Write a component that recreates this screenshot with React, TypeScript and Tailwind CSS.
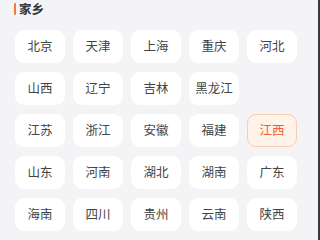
import React from "react";

const rows: string[][] = [
  ["北京", "天津", "上海", "重庆", "河北"],
  ["山西", "辽宁", "吉林", "黑龙江"],
  ["江苏", "浙江", "安徽", "福建", "江西"],
  ["山东", "河南", "湖北", "湖南", "广东"],
  ["海南", "四川", "贵州", "云南", "陕西"],
];

export default function App() {
  const font = { fontFamily: '"Noto Sans CJK SC", "Noto Sans", sans-serif' };
  return (
    <div className="w-[320px] h-[240px] overflow-hidden bg-[#f4f4f6] flex" style={font}>
      <div className="flex-1 flex flex-col">
        <div className="flex items-center h-[18px] mt-[0px] pl-[14px] gap-[3px]">
          <div className="w-[2px] h-[12px] bg-[#f07a3a] rounded-[1px]" />
          <span className="text-[12.5px] leading-none font-bold text-[#333]">家乡</span>
        </div>
        <div className="flex flex-col gap-[9px] mt-[12px] pl-[15px]">
          {rows.map((r, i) => (
            <div key={i} className="flex gap-[8px]">
              {r.map((name) => {
                const sel = name === "江西";
                return (
                  <div
                    key={name}
                    className={
                      sel
                        ? "w-[50px] h-[33px] rounded-[9px] flex items-center justify-center text-[12.5px] bg-[#fff2ea] border border-[#f8cdb2] text-[#f0602a]"
                        : "w-[50px] h-[33px] rounded-[9px] flex items-center justify-center text-[12.5px] bg-white text-[#444]"
                    }
                  >
                    {name}
                  </div>
                );
              })}
            </div>
          ))}
        </div>
      </div>
      <div className="w-[2px] h-full bg-[#3a3a3a]" />
    </div>
  );
}
